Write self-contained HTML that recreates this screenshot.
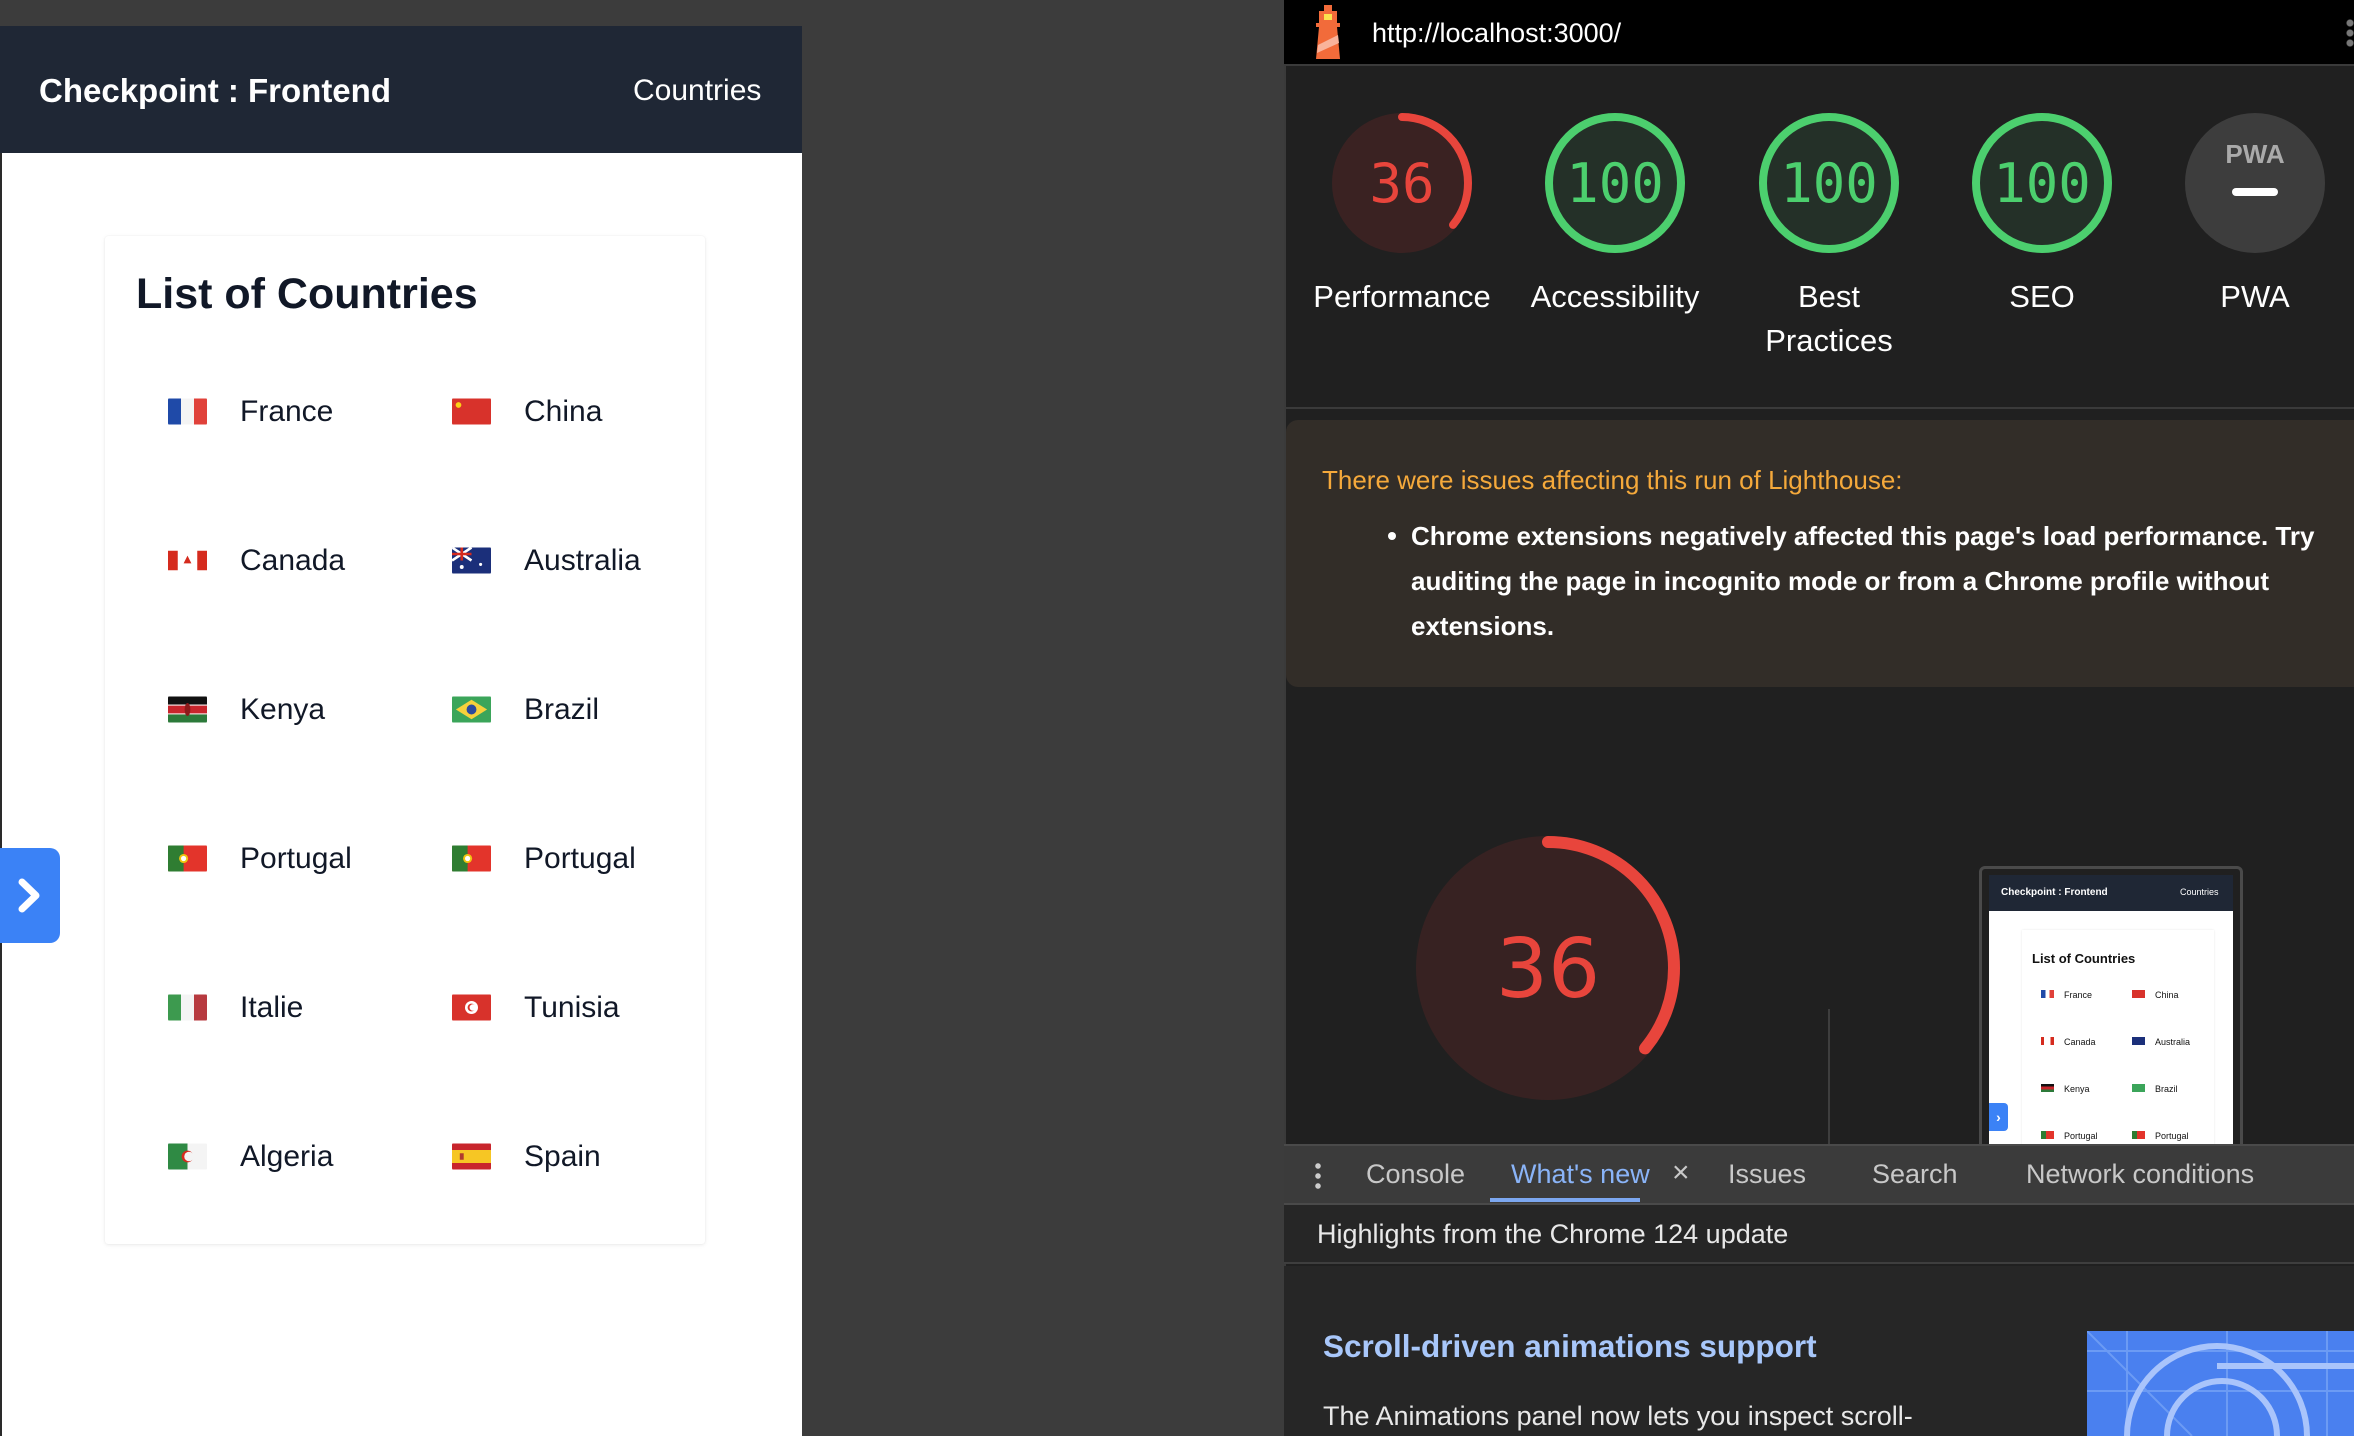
<!DOCTYPE html>
<html><head><meta charset="utf-8">
<style>
*{margin:0;padding:0;box-sizing:border-box}
body{width:2354px;height:1436px;background:#3c3c3c;position:relative;overflow:hidden;font-family:"Liberation Sans",Arial,sans-serif}
.abs{position:absolute}
#page{left:0;top:26px;width:802px;height:1410px;background:#fff;border-left:2px solid #2a2a2a}
#hdr{left:0;top:26px;width:802px;height:127px;background:#1f2735}
.t{position:absolute;white-space:nowrap}
#card{left:105px;top:236px;width:600px;height:1008px;background:#fff;box-shadow:0 1px 4px rgba(0,0,0,.08),0 0 1px rgba(0,0,0,.1);border-radius:3px}
.row{position:absolute;font-size:30px;color:#111827;height:40px;line-height:40px}
.flag{position:absolute;width:39px;height:27px;top:6px;border-radius:2px;overflow:hidden}
#tab{left:0;top:848px;width:60px;height:95px;background:#3b82f6;border-radius:0 10px 10px 0}
#dev{left:1284px;top:0;width:1070px;height:1436px;background:#202020;border-left:2px solid #3a3a3a}
#top{left:1284px;top:0;width:1070px;height:66px;background:#000;border-bottom:2px solid #3a3a3a}
.lbl{position:absolute;color:#fff;font-size:31px;text-align:center;width:220px;line-height:44px}
</style></head><body>
<div class="abs" id="page"></div>
<div class="abs" id="hdr"></div>
<div class="t" style="left:39px;top:72px;font-size:33px;font-weight:bold;color:#fff">Checkpoint : Frontend</div>
<div class="t" style="left:633px;top:74px;font-size:30px;color:#fff">Countries</div>
<div class="abs" id="card"></div>
<div class="t" style="left:136px;top:270px;font-size:43px;font-weight:bold;color:#111827">List of Countries</div>

<div class="row" style="left:168px;top:392px"><svg class="flag" style="left:0" viewBox="0 0 3 2"><rect width="1" height="2" fill="#1f4aa8"/><rect x="1" width="1" height="2" fill="#f4f4f4"/><rect x="2" width="1" height="2" fill="#e0413a"/></svg><span style="position:absolute;left:72px">France</span></div>
<div class="row" style="left:452px;top:392px"><svg class="flag" style="left:0" viewBox="0 0 3 2"><rect width="3" height="2" fill="#d8322b"/><circle cx=".5" cy=".5" r=".22" fill="#fcd116"/></svg><span style="position:absolute;left:72px">China</span></div>
<div class="row" style="left:168px;top:541px"><svg class="flag" style="left:0" viewBox="0 0 4 2"><rect width="4" height="2" fill="#fff"/><rect width="1" height="2" fill="#d52b1e"/><rect x="3" width="1" height="2" fill="#d52b1e"/><path d="M2 .5L2.4 1.3H1.6Z" fill="#d52b1e"/></svg><span style="position:absolute;left:72px">Canada</span></div>
<div class="row" style="left:452px;top:541px"><svg class="flag" style="left:0" viewBox="0 0 3 2"><rect width="3" height="2" fill="#1b2f7a"/><path d="M0 0L1.5 1M1.5 0L0 1" stroke="#fff" stroke-width=".2"/><path d="M.75 0V1M0 .5H1.5" stroke="#d52b1e" stroke-width=".2"/><circle cx="2.2" cy="1.3" r=".12" fill="#fff"/><circle cx=".75" cy="1.5" r=".15" fill="#fff"/></svg><span style="position:absolute;left:72px">Australia</span></div>
<div class="row" style="left:168px;top:690px"><svg class="flag" style="left:0" viewBox="0 0 3 2"><rect width="3" height=".62" fill="#111"/><rect y=".62" width="3" height=".76" fill="#c8252c"/><rect y=".62" width="3" height=".08" fill="#fff"/><rect y="1.3" width="3" height=".08" fill="#fff"/><rect y="1.38" width="3" height=".62" fill="#2c7a3a"/><ellipse cx="1.5" cy="1" rx=".22" ry=".5" fill="#8b1a1a"/></svg><span style="position:absolute;left:72px">Kenya</span></div>
<div class="row" style="left:452px;top:690px"><svg class="flag" style="left:0" viewBox="0 0 3 2"><rect width="3" height="2" fill="#3ba55a"/><path d="M1.5 .25L2.7 1L1.5 1.75L.3 1Z" fill="#f6d13c"/><circle cx="1.5" cy="1" r=".38" fill="#2b4a9e"/></svg><span style="position:absolute;left:72px">Brazil</span></div>
<div class="row" style="left:168px;top:839px"><svg class="flag" style="left:0" viewBox="0 0 3 2"><rect width="3" height="2" fill="#e3342b"/><rect width="1.2" height="2" fill="#2f7d32"/><circle cx="1.2" cy="1" r=".35" fill="#f1c40f"/><circle cx="1.2" cy="1" r=".2" fill="#fff"/></svg><span style="position:absolute;left:72px">Portugal</span></div>
<div class="row" style="left:452px;top:839px"><svg class="flag" style="left:0" viewBox="0 0 3 2"><rect width="3" height="2" fill="#e3342b"/><rect width="1.2" height="2" fill="#2f7d32"/><circle cx="1.2" cy="1" r=".35" fill="#f1c40f"/><circle cx="1.2" cy="1" r=".2" fill="#fff"/></svg><span style="position:absolute;left:72px">Portugal</span></div>
<div class="row" style="left:168px;top:988px"><svg class="flag" style="left:0" viewBox="0 0 3 2"><rect width="1" height="2" fill="#3d9a4f"/><rect x="1" width="1" height="2" fill="#f4f4f4"/><rect x="2" width="1" height="2" fill="#b73a3f"/></svg><span style="position:absolute;left:72px">Italie</span></div>
<div class="row" style="left:452px;top:988px"><svg class="flag" style="left:0" viewBox="0 0 3 2"><rect width="3" height="2" fill="#d8322b"/><circle cx="1.5" cy="1" r=".5" fill="#fff"/><circle cx="1.5" cy="1" r=".3" fill="#d8322b"/><circle cx="1.6" cy="1" r=".25" fill="#fff"/></svg><span style="position:absolute;left:72px">Tunisia</span></div>
<div class="row" style="left:168px;top:1137px"><svg class="flag" style="left:0" viewBox="0 0 3 2"><rect width="1.5" height="2" fill="#2f8a44"/><rect x="1.5" width="1.5" height="2" fill="#f4f4f4"/><circle cx="1.5" cy="1" r=".45" fill="#d52b1e"/><circle cx="1.62" cy="1" r=".37" fill="#f4f4f4"/></svg><span style="position:absolute;left:72px">Algeria</span></div>
<div class="row" style="left:452px;top:1137px"><svg class="flag" style="left:0" viewBox="0 0 3 2"><rect width="3" height="2" fill="#c8252c"/><rect y=".5" width="3" height="1" fill="#f6c624"/><rect x=".6" y=".75" width=".3" height=".5" fill="#b03a2e"/></svg><span style="position:absolute;left:72px">Spain</span></div>

<div class="abs" id="tab"><svg width="60" height="95" viewBox="0 0 60 95"><path d="M22 34L36 47.5L22 61" stroke="#fff" stroke-width="7" fill="none" stroke-linecap="round" stroke-linejoin="round"/></svg></div>

<div class="abs" id="dev"></div>
<div class="abs" id="top"></div>
<svg class="abs" style="left:1311px;top:5px" width="34" height="56" viewBox="0 0 34 56"><rect x="13" y="0" width="8" height="6" fill="#f26b3a"/><rect x="8" y="6" width="18" height="12" fill="#f26b3a"/><rect x="13" y="9" width="8" height="6" fill="#fce34e"/><rect x="5" y="18" width="24" height="4" fill="#f26b3a"/><path d="M8 22H26L29 54H5Z" fill="#f26b3a"/><path d="M7 40L27 30L28 38L6 48Z" fill="#f9b39b"/></svg>
<div class="t" style="left:1372px;top:18px;font-size:27px;color:#fff">http://localhost:3000/</div>
<div class="abs" style="left:2346px;top:18px;width:8px;height:30px;background:radial-gradient(circle,#777 3px,transparent 4px) 0 0/8px 10px"></div>

<svg class="abs" style="left:1284px;top:66px" width="1070" height="360">
<g transform="translate(118,117)"><circle r="70" fill="#3a2222"/><circle r="66" fill="none" stroke="#e8453c" stroke-width="8" stroke-dasharray="149 1000" stroke-linecap="round" transform="rotate(-90)"/><text y="19" text-anchor="middle" font-size="54" fill="#e8453c" font-family="DejaVu Sans Mono,monospace">36</text></g>
<g transform="translate(331,117)"><circle r="70" fill="#243028"/><circle r="66" fill="none" stroke="#4ccf6e" stroke-width="8"/><text y="19" text-anchor="middle" font-size="54" fill="#4ccf6e" font-family="DejaVu Sans Mono,monospace">100</text></g>
<g transform="translate(545,117)"><circle r="70" fill="#243028"/><circle r="66" fill="none" stroke="#4ccf6e" stroke-width="8"/><text y="19" text-anchor="middle" font-size="54" fill="#4ccf6e" font-family="DejaVu Sans Mono,monospace">100</text></g>
<g transform="translate(758,117)"><circle r="70" fill="#243028"/><circle r="66" fill="none" stroke="#4ccf6e" stroke-width="8"/><text y="19" text-anchor="middle" font-size="54" fill="#4ccf6e" font-family="DejaVu Sans Mono,monospace">100</text></g>
<g transform="translate(971,117)"><circle r="70" fill="#3d3d3d"/><text y="-20" text-anchor="middle" font-size="26" font-weight="bold" fill="#aaa" font-family="Liberation Sans,sans-serif">PWA</text><rect x="-23" y="5" width="46" height="8" rx="4" fill="#fff"/></g>
</svg>
<div class="lbl" style="left:1292px;top:275px">Performance</div>
<div class="lbl" style="left:1505px;top:275px">Accessibility</div>
<div class="lbl" style="left:1719px;top:275px">Best<br>Practices</div>
<div class="lbl" style="left:1932px;top:275px">SEO</div>
<div class="lbl" style="left:2145px;top:275px">PWA</div>
<div class="abs" style="left:1284px;top:407px;width:1070px;height:2px;background:#3a3a3a"></div>

<div class="abs" style="left:1286px;top:420px;width:1080px;height:267px;background:#322d28;border-radius:12px"></div>
<div class="t" style="left:1322px;top:465px;font-size:26px;color:#f5a93b">There were issues affecting this run of Lighthouse:</div>
<div class="abs" style="left:1411px;top:514px;width:945px;font-size:26px;line-height:45px;color:#fff;font-weight:bold">Chrome extensions negatively affected this page's load performance. Try auditing the page in incognito mode or from a Chrome profile without extensions.</div>
<div class="abs" style="left:1388px;top:532px;width:8px;height:8px;border-radius:50%;background:#fff"></div>

<svg class="abs" style="left:1404px;top:828px" width="290" height="290">
<g transform="translate(144,140)"><circle r="132" fill="#372222"/><circle r="126" fill="none" stroke="#e8453c" stroke-width="12" stroke-dasharray="285 1000" stroke-linecap="round" transform="rotate(-90)"/><text y="29" text-anchor="middle" font-size="82" fill="#e8453c" font-family="DejaVu Sans,sans-serif">36</text></g>
</svg>
<div class="abs" style="left:1828px;top:1009px;width:2px;height:136px;background:#3e3e3e"></div>

<div class="abs" style="left:1979px;top:866px;width:264px;height:290px;border:3px solid #4a4a4a;border-radius:6px;background:#202020"></div>
<div class="abs" style="left:1989px;top:875px;width:244px;height:270px;background:#fff;overflow:hidden">
 <div style="position:absolute;left:0;top:0;width:244px;height:36px;background:#1f2735"></div>
 <div class="t" style="left:12px;top:12px;font-size:10px;font-weight:bold;color:#fff">Checkpoint : Frontend</div>
 <div class="t" style="left:191px;top:12px;font-size:9px;color:#fff">Countries</div>
 <div style="position:absolute;left:33px;top:55px;width:192px;height:240px;box-shadow:0 0 2px rgba(0,0,0,.1)"></div>
 <div class="t" style="left:43px;top:76px;font-size:13px;font-weight:bold;color:#111">List of Countries</div>
 <div class="t" style="left:52px;top:115px;font-size:9px;color:#111"><span style="display:inline-block;width:13px;height:8px;background:linear-gradient(90deg,#1f4aa8 33%,#fff 33% 66%,#e0413a 66%);margin-right:10px"></span>France</div>
 <div class="t" style="left:143px;top:115px;font-size:9px;color:#111"><span style="display:inline-block;width:13px;height:8px;background:#d8322b;margin-right:10px"></span>China</div>
 <div class="t" style="left:52px;top:162px;font-size:9px;color:#111"><span style="display:inline-block;width:13px;height:8px;background:linear-gradient(90deg,#d52b1e 25%,#fff 25% 75%,#d52b1e 75%);margin-right:10px"></span>Canada</div>
 <div class="t" style="left:143px;top:162px;font-size:9px;color:#111"><span style="display:inline-block;width:13px;height:8px;background:#1b2f7a;margin-right:10px"></span>Australia</div>
 <div class="t" style="left:52px;top:209px;font-size:9px;color:#111"><span style="display:inline-block;width:13px;height:8px;background:linear-gradient(#111 33%,#c8252c 33% 66%,#2c7a3a 66%);margin-right:10px"></span>Kenya</div>
 <div class="t" style="left:143px;top:209px;font-size:9px;color:#111"><span style="display:inline-block;width:13px;height:8px;background:#3ba55a;margin-right:10px"></span>Brazil</div>
 <div class="t" style="left:52px;top:256px;font-size:9px;color:#111"><span style="display:inline-block;width:13px;height:8px;background:linear-gradient(90deg,#2f7d32 40%,#e3342b 40%);margin-right:10px"></span>Portugal</div>
 <div class="t" style="left:143px;top:256px;font-size:9px;color:#111"><span style="display:inline-block;width:13px;height:8px;background:linear-gradient(90deg,#2f7d32 40%,#e3342b 40%);margin-right:10px"></span>Portugal</div>
 <div style="position:absolute;left:0;top:228px;width:19px;height:28px;background:#3b82f6;border-radius:0 4px 4px 0;color:#fff;font-size:14px;font-weight:bold;line-height:28px;text-align:center">›</div>
</div>

<div class="abs" style="left:1284px;top:1144px;width:1070px;height:61px;background:#3b3b3b;border-top:2px solid #4a4a4a;border-bottom:2px solid #4a4a4a"></div>
<div class="abs" style="left:1315px;top:1161px;width:6px;height:28px;background:radial-gradient(circle,#ccc 2.5px,transparent 3px) 0 0/6px 10px"></div>
<div class="t" style="left:1366px;top:1159px;font-size:27px;color:#c8c8c8">Console</div>
<div class="t" style="left:1511px;top:1159px;font-size:27px;color:#8ab4f8">What's new</div>
<div class="t" style="left:1672px;top:1156px;font-size:30px;color:#c8c8c8">×</div>
<div class="abs" style="left:1490px;top:1198px;width:150px;height:4px;background:#7ca7f0"></div>
<div class="t" style="left:1728px;top:1159px;font-size:27px;color:#c8c8c8">Issues</div>
<div class="t" style="left:1872px;top:1159px;font-size:27px;color:#c8c8c8">Search</div>
<div class="t" style="left:2026px;top:1159px;font-size:27px;color:#c8c8c8">Network conditions</div>
<div class="abs" style="left:1284px;top:1205px;width:1070px;height:59px;background:#262626;border-bottom:2px solid #3e3e3e"></div>
<div class="t" style="left:1317px;top:1219px;font-size:27px;color:#e8e8e8">Highlights from the Chrome 124 update</div>
<div class="abs" style="left:1284px;top:1266px;width:1070px;height:170px;background:#262626"></div>
<div class="t" style="left:1323px;top:1328px;font-size:31.5px;font-weight:bold;color:#a8c7fa">Scroll-driven animations support</div>
<div class="t" style="left:1323px;top:1401px;font-size:27px;color:#e8e8e8">The Animations panel now lets you inspect scroll-</div>
<svg class="abs" style="left:2087px;top:1331px" width="267" height="105"><rect width="267" height="105" fill="#4a80ef"/><g stroke="#7aa6f7" stroke-width="2" fill="none" opacity=".7"><path d="M0 20H267M0 60H267M40 0V105M140 0V105M240 0V105M0 0L105 105"/></g><g stroke="#a9c4fb" stroke-width="6" fill="none"><path d="M40 105A90 90 0 0 1 220 105"/><path d="M80 105A55 55 0 0 1 190 105"/><path d="M130 35H267"/></g></svg>
</body></html>
